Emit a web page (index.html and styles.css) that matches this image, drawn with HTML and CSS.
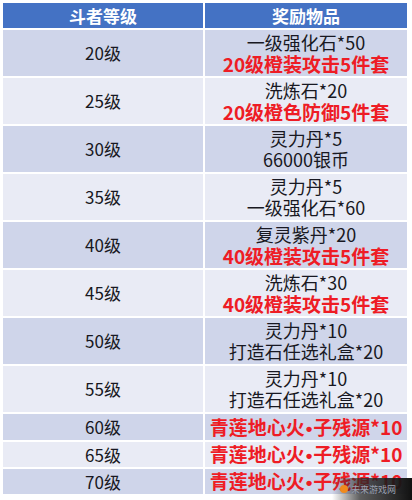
FILE: index.html
```html
<!DOCTYPE html>
<html lang="zh">
<head>
<meta charset="utf-8">
<link rel="stylesheet" href="styles.css">
</head>
<body>
<div class="sheet">
  <div class="grid">
    <div class="cell head">斗者等级</div>
    <div class="cell head">奖励物品</div>

    <div class="cell lvl odd tall">20级</div>
    <div class="cell rew odd tall"><span>一级强化石*50</span><span class="red">20级橙装攻击5件套</span></div>

    <div class="cell lvl even tall">25级</div>
    <div class="cell rew even tall"><span>洗炼石*20</span><span class="red">20级橙色防御5件套</span></div>

    <div class="cell lvl odd tall">30级</div>
    <div class="cell rew odd tall"><span>灵力丹*5</span><span>66000银币</span></div>

    <div class="cell lvl even tall">35级</div>
    <div class="cell rew even tall"><span>灵力丹*5</span><span>一级强化石*60</span></div>

    <div class="cell lvl odd tall">40级</div>
    <div class="cell rew odd tall"><span>复灵紫丹*20</span><span class="red">40级橙装攻击5件套</span></div>

    <div class="cell lvl even tall">45级</div>
    <div class="cell rew even tall"><span>洗炼石*30</span><span class="red">40级橙装攻击5件套</span></div>

    <div class="cell lvl odd tall">50级</div>
    <div class="cell rew odd tall"><span>灵力丹*10</span><span>打造石任选礼盒*20</span></div>

    <div class="cell lvl even tall">55级</div>
    <div class="cell rew even tall"><span>灵力丹*10</span><span>打造石任选礼盒*20</span></div>

    <div class="cell lvl odd short">60级</div>
    <div class="cell rew odd short"><span class="red">青莲地心火<b class="dot">•</b>子残源*10</span></div>

    <div class="cell lvl even short">65级</div>
    <div class="cell rew even short"><span class="red">青莲地心火<b class="dot">•</b>子残源*10</span></div>

    <div class="cell lvl odd short">70级</div>
    <div class="cell rew odd short"><span class="red">青莲地心火<b class="dot">•</b>子残源*10</span></div>
  </div>
  <div class="mark"><span class="mark-icon"></span><span class="mark-text">未来游戏网</span></div>
</div>
</body>
</html>
```
FILE: styles.css
```css
html, body {
  margin: 0;
  padding: 0;
  background: #ffffff;
}
body {
  width: 412px;
  height: 500px;
  overflow: hidden;
  font-family: "Noto Sans CJK SC", "Noto Sans", sans-serif;
  color: #181822;
}
.sheet {
  position: relative;
  width: 412px;
  height: 500px;
  padding: 3px 0 0 3px;
  box-sizing: border-box;
}
.grid {
  display: grid;
  grid-template-columns: 200px 202px;
  grid-template-rows: 25px repeat(8, 46px) 26px 25px 25px;
  gap: 2px;
}
.cell {
  display: flex;
  flex-direction: column;
  align-items: center;
  justify-content: center;
  white-space: nowrap;
}
.head {
  background: #4472c4;
  color: #ffffff;
  font-weight: bold;
  font-size: 17px;
  line-height: 20px;
}
.odd { background: #cfd5ea; }
.even { background: #e9ebf5; }
.lvl {
  font-size: 17px;
  line-height: 20px;
}
.rew {
  font-size: 18px;
  line-height: 21px;
}
.rew span { display: block; }
.red {
  color: #ee1c25;
  font-weight: bold;
  font-size: 19px;
}
.dot {
  font-family: "Liberation Sans", sans-serif;
  font-weight: bold;
  padding: 0 1px;
}
.mark {
  position: absolute;
  right: 0;
  bottom: 0;
  width: 80px;
  height: 22px;
  display: flex;
  align-items: center;
  gap: 3px;
  padding-left: 8px;
  box-sizing: border-box;
  background: linear-gradient(90deg, rgba(60,60,60,0) 0%, rgba(40,40,40,0.75) 35%, #111 100%);
}
.mark-icon {
  width: 8px;
  height: 8px;
  border-radius: 50%;
  background: #f08a1c;
}
.mark-text {
  font-size: 9px;
  color: #9aa0b0;
}
```
